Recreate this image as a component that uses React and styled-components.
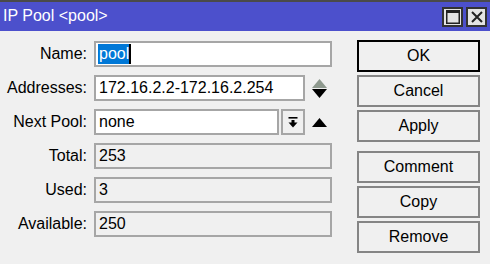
import React from 'react';
import styled, { createGlobalStyle } from 'styled-components';

const Global = createGlobalStyle`
  html, body { margin: 0; padding: 0; background: #f0f0f0; }
  body {
    font-family: "Liberation Sans", Arial, sans-serif;
    width: 490px; height: 264px; overflow: hidden;
  }
  * { box-sizing: border-box; }
`;

const Window = styled.div`
  width: 490px;
  height: 264px;
  display: flex;
  flex-direction: column;
  background: #f0f0f0;
`;

const TitleBar = styled.div`
  height: 31px;
  border-top: 2px solid #4a4a4a;
  background: #4c50cc;
  display: flex;
  align-items: center;
  padding: 0 3px 0 3px;
`;

const TitleText = styled.div`
  flex: 1;
  color: #ffffff;
  font-size: 16px;
  padding-bottom: 1px;
`;

const TitleButtons = styled.div`
  display: flex;
  gap: 3px;
  margin-top: 1px;
`;

const TitleButton = styled.div`
  width: 21px;
  height: 20px;
  border: 2px solid #333;
  background: #e4e4e4;
  display: flex;
  align-items: center;
  justify-content: center;
`;

const Body = styled.div`
  display: flex;
  padding: 9px 10px 0 0;
`;

const Form = styled.div`
  display: grid;
  grid-template-columns: 87px 238px;
  grid-auto-rows: 26px;
  column-gap: 7px;
  row-gap: 8px;
  margin-top: 1px;
`;

const Label = styled.div`
  font-size: 16px;
  color: #000;
  text-align: right;
  align-self: center;
`;

const FieldRow = styled.div`
  display: flex;
  align-items: center;
`;

const Field = styled.div`
  width: ${p => p.$w}px;
  height: 26px;
  border: 2px solid #a6a6a6;
  background: ${p => (p.$readOnly ? '#f0f0f0' : '#ffffff')};
  font-size: 16px;
  color: #000;
  display: flex;
  align-items: center;
  padding-left: 3px;
  white-space: nowrap;
`;

const Selected = styled.span`
  background: #0078d7;
  color: #fff;
  margin-left: -1px;
  padding: 1px 0 1px 1px;
  border-right: 2px solid #000;
`;

const DropButton = styled.div`
  width: 24px;
  height: 26px;
  margin-left: 2px;
  border: 2px solid #a6a6a6;
  background: #f0f0f0;
  display: flex;
  align-items: center;
  justify-content: center;
`;

const ArrowBox = styled.div`
  width: 15px;
  margin-left: 7px;
  display: flex;
  flex-direction: column;
  align-items: center;
  gap: 1px;
`;

const Buttons = styled.div`
  margin-left: 25px;
  width: 123px;
  display: flex;
  flex-direction: column;
  gap: 3px;
`;

const Button = styled.div`
  height: 32px;
  border: 2px solid ${p => (p.$primary ? '#000' : '#858585')};
  background: #f0f0f0;
  font-size: 16px;
  color: #000;
  display: flex;
  align-items: center;
  justify-content: center;
  margin-top: ${p => (p.$gapBefore ? '6px' : '0')};
`;

const Tri = ({ up, color }) => (
  <svg width="15" height="9" viewBox="0 0 15 9">
    {up ? (
      <polygon points="7.5,0 15,9 0,9" fill={color} />
    ) : (
      <polygon points="0,0 15,0 7.5,9" fill={color} />
    )}
  </svg>
);

const DropIcon = () => (
  <svg width="10" height="11" viewBox="0 0 10 11">
    <rect x="0.5" y="0" width="9" height="1.6" fill="#000" />
    <rect x="3.5" y="3" width="3" height="3" fill="#000" />
    <polygon points="0.5,5.5 9.5,5.5 5,10.5" fill="#000" />
  </svg>
);

const MaxIcon = () => (
  <svg width="14" height="14" viewBox="0 0 14 14">
    <rect x="0.75" y="0.75" width="12.5" height="12.5" fill="none" stroke="#222" strokeWidth="1.5" />
    <rect x="0" y="0" width="14" height="3" fill="#222" />
  </svg>
);

const CloseIcon = () => (
  <svg width="12" height="12" viewBox="0 0 12 12">
    <path d="M1 1 L11 11 M11 1 L1 11" stroke="#222" strokeWidth="2" />
  </svg>
);

export default function App() {
  return (
    <>
      <Global />
      <Window>
        <TitleBar>
          <TitleText>IP Pool &lt;pool&gt;</TitleText>
          <TitleButtons>
            <TitleButton><MaxIcon /></TitleButton>
            <TitleButton><CloseIcon /></TitleButton>
          </TitleButtons>
        </TitleBar>
        <Body>
          <Form>
            <Label>Name:</Label>
            <FieldRow>
              <Field $w={238}><Selected>pool</Selected></Field>
            </FieldRow>

            <Label>Addresses:</Label>
            <FieldRow>
              <Field $w={211}>172.16.2.2-172.16.2.254</Field>
              <ArrowBox>
                <Tri up color="#8f9a8f" />
                <Tri color="#000" />
              </ArrowBox>
            </FieldRow>

            <Label>Next Pool:</Label>
            <FieldRow>
              <Field $w={185}>none</Field>
              <DropButton><DropIcon /></DropButton>
              <ArrowBox>
                <Tri up color="#000" />
              </ArrowBox>
            </FieldRow>

            <Label>Total:</Label>
            <FieldRow>
              <Field $w={238} $readOnly>253</Field>
            </FieldRow>

            <Label>Used:</Label>
            <FieldRow>
              <Field $w={238} $readOnly>3</Field>
            </FieldRow>

            <Label>Available:</Label>
            <FieldRow>
              <Field $w={238} $readOnly>250</Field>
            </FieldRow>
          </Form>
          <Buttons>
            <Button $primary>OK</Button>
            <Button>Cancel</Button>
            <Button>Apply</Button>
            <Button $gapBefore>Comment</Button>
            <Button>Copy</Button>
            <Button>Remove</Button>
          </Buttons>
        </Body>
      </Window>
    </>
  );
}
